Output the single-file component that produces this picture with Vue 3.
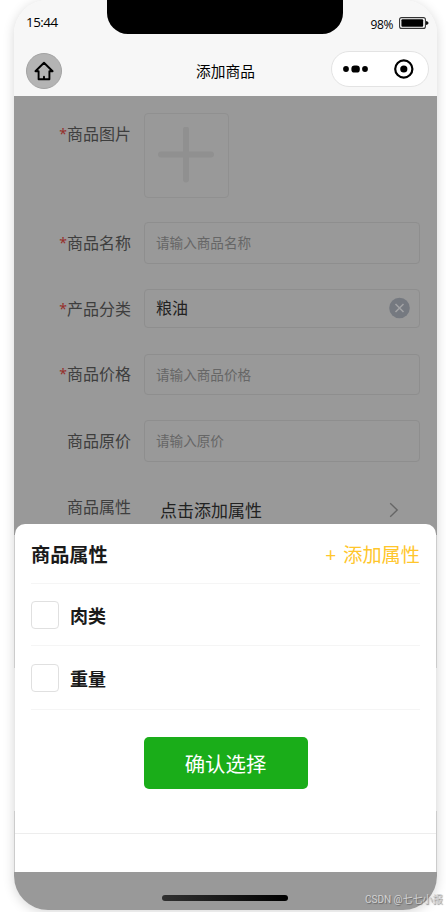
<script setup>
const fields = [
  { label: '商品名称', required: true, placeholder: '请输入商品名称', size: 'name' },
  { label: '产品分类', required: true, value: '粮油', size: 'category' },
  { label: '商品价格', required: true, placeholder: '请输入商品价格', size: 'price' },
  { label: '商品原价', required: false, placeholder: '请输入原价', size: 'original' },
]
const attributes = ['肉类', '重量']
</script>

<template>
  <div class="stage">
    <div class="phone">
      <header class="header">
        <div class="notch"></div>
        <div class="status">
          <span class="time">15:44</span>
          <span class="power">
            <span class="percent">98%</span>
            <svg class="battery" width="30" height="12" viewBox="0 0 30 12">
              <rect x=".6" y=".6" width="25.8" height="10.8" rx="2" fill="#fff" stroke="#333" stroke-width="1.1" />
              <rect x="2.4" y="2.3" width="21.8" height="7.4" rx="1" fill="#000" />
              <path d="M27 4 Q29.6 4.3 29.6 6 Q29.6 7.7 27 8Z" fill="#111" />
            </svg>
          </span>
        </div>
        <div class="navbar">
          <div class="home">
            <svg width="20" height="20" viewBox="0 0 20 20" fill="none" stroke="#000" stroke-width="1.9" stroke-linejoin="round" stroke-linecap="round">
              <path d="M10 1.7 L1.4 10.2 H4.6 V18.2 H15.4 V10.2 H18.6 Z M10 15.8 V18" />
            </svg>
          </div>
          <h1 class="title">添加商品</h1>
          <div class="capsule">
            <svg width="98" height="36" viewBox="0 0 98 36">
              <circle cx="15" cy="18" r="2.9" />
              <rect x="20.4" y="14.4" width="8.4" height="7.2" rx="3.2" />
              <circle cx="34" cy="18" r="2.9" />
              <circle cx="72.8" cy="18" r="8.6" fill="none" stroke="#000" stroke-width="2.2" />
              <circle cx="72.8" cy="18" r="3.6" />
            </svg>
          </div>
        </div>
      </header>

      <main class="form">
        <div class="row upload-row">
          <label class="label"><i>*</i>商品图片</label>
          <div class="upload">
            <svg width="58" height="58" viewBox="0 0 58 58" stroke="#909090" stroke-width="6" stroke-linecap="round">
              <path d="M28 2.500V52.500M3 27.500H53" />
            </svg>
          </div>
        </div>
        <div v-for="f in fields" :key="f.label" class="row" :class="f.size">
          <label class="label"><i v-if="f.required">*</i>{{ f.label }}</label>
          <div class="input">
            <span v-if="f.value" class="value">{{ f.value }}</span>
            <span v-else class="placeholder">{{ f.placeholder }}</span>
            <svg v-if="f.value" class="clear" width="22" height="22" viewBox="0 0 22 22">
              <circle cx="11.5" cy="11" r="10.3" fill="#757980" />
              <path d="M7.5 7l8 8M15.5 7l-8 8" stroke="#a3a4a6" stroke-width="1.5" />
            </svg>
          </div>
        </div>
        <div class="row attribute-row">
          <label class="label">商品属性</label>
          <div class="picker">
            <span>点击添加属性</span>
            <svg width="10" height="16" viewBox="0 0 10 16" fill="none" stroke="#666" stroke-width="1.4">
              <path d="M1.2 1.2L8.2 8L1.2 14.8" />
            </svg>
          </div>
        </div>
      </main>

      <section class="sheet">
        <div class="sheet-head">
          <h2>商品属性</h2>
          <span class="add"><b>+</b>添加属性</span>
        </div>
        <div v-for="name in attributes" :key="name" class="option">
          <span class="checkbox"></span>
          <span class="option-name">{{ name }}</span>
        </div>
        <button class="confirm">确认选择</button>
        <div class="sheet-foot"></div>
      </section>
      <div class="home-bar"></div>
    </div>
    <span class="watermark">CSDN @七七小报</span>
  </div>
</template>

<style>
body {
  background: #fff;
  overflow: hidden;
}
</style>

<style scoped>
* {
  box-sizing: border-box;
}
.stage {
  position: relative;
  width: 446px;
  height: 912px;
  padding-left: 14px;
  overflow: hidden;
  font-family: "Noto Sans", "Noto Sans CJK SC", sans-serif;
}
.phone {
  position: relative;
  display: flex;
  flex-direction: column;
  width: 423px;
  height: 910px;
  border-radius: 34px;
  overflow: hidden;
  background: linear-gradient(#f7f7f7 0 96px, #999 96px 535px, #ccc 535px 668px, #e8e8e8 668px 811px, #ccc 811px 872px, #999 872px);
  box-shadow: 0 2px 12px rgba(0, 0, 0, 0.16);
}
.header {
  position: relative;
  height: 96px;
  flex: none;
  background: #f7f7f7;
}
.notch {
  position: absolute;
  left: 93px;
  top: 0;
  width: 236px;
  height: 33.5px;
  border-radius: 0 0 21px 21px;
  background: #000;
}
.status {
  display: flex;
  justify-content: space-between;
  align-items: center;
  height: 46px;
  padding: 0 8px 0 12px;
  color: #000;
}
.time {
  margin-top: -2px;
  font-family: "Open Sans", "Noto Sans", sans-serif;
  font-size: 13.4px;
  letter-spacing: -0.5px;
}
.power {
  display: flex;
  align-items: center;
  gap: 6px;
}
.percent {
  font-family: "Open Sans", "Noto Sans", sans-serif;
  font-size: 12px;
  letter-spacing: -0.35px;
  padding-top: 2px;
}
.navbar {
  display: grid;
  grid-template-columns: 98px 1fr 98px;
  align-items: center;
  height: 46px;
  padding: 0 8px 0 12px;
}
.home {
  display: flex;
  align-items: center;
  justify-content: center;
  width: 36px;
  height: 36px;
  margin-top: 4px;
  border: 1px solid #a3a3a3;
  border-radius: 50%;
  background: #b4b4b4;
}
.title {
  margin: 3px 4px 0 0;
  font-size: 14.7px;
  line-height: 20px;
  font-weight: 400;
  text-align: center;
  color: #000;
}
.capsule {
  display: flex;
  align-items: center;
  justify-content: center;
  width: 98px;
  height: 36px;
  border: 1px solid #e3e3e3;
  border-radius: 18px;
  background: #fff;
}
.capsule svg {
  flex: none;
}
.form {
  display: flex;
  flex-direction: column;
  padding: 17px 17px 0 0;
}
.row {
  display: grid;
  grid-template-columns: 117px 1fr;
  column-gap: 13px;
  margin-bottom: 25px;
}
.upload-row {
  height: 84px;
}
.name,
.original {
  height: 42px;
}
.category {
  height: 39px;
  margin-bottom: 26px;
}
.price {
  height: 41px;
}
.label {
  height: 39px;
  line-height: 43px;
  text-align: right;
  white-space: nowrap;
  font-size: 16px;
  color: #3e3e3e;
}
.category .label,
.price .label {
  line-height: 41px;
}
.label i {
  position: relative;
  top: -1px;
  font-style: normal;
  font-size: 14px;
  color: #962f2b;
}
.upload {
  display: flex;
  align-items: center;
  justify-content: center;
  width: 85px;
  height: 85px;
  border: 1px solid #909090;
  border-radius: 4px;
}
.input {
  display: flex;
  align-items: center;
  justify-content: space-between;
  padding: 0 9px 2px 11px;
  border: 1px solid #8e8e8e;
  border-radius: 4px;
}
.placeholder {
  font-size: 13.6px;
  color: #666;
}
.value {
  margin-top: -1px;
  font-size: 16px;
  color: #222;
}
.attribute-row {
  margin: 3px 0 0;
  height: 40px;
}
.attribute-row .label {
  line-height: 35px;
}
.picker {
  display: flex;
  align-items: center;
  justify-content: space-between;
  padding: 0 21px 0 16px;
  font-size: 17px;
  color: #222;
}
.picker span {
  margin-top: -1px;
}
.sheet {
  position: absolute;
  left: 1px;
  top: 524px;
  width: 421px;
  height: 348px;
  padding: 0 16px;
  display: flex;
  flex-direction: column;
  background: #fff;
  border-radius: 10px 10px 0 0;
}
.sheet-head {
  display: flex;
  align-items: center;
  justify-content: space-between;
  height: 60px;
  flex: none;
  border-bottom: 1px solid #f5f5f5;
}
h2 {
  margin: 1px 0 0;
  font-size: 19.2px;
  font-weight: 700;
  color: #1a1a1a;
}
.add {
  font-size: 19.2px;
  color: #ffc62b;
}
.add b {
  margin-right: 7px;
  font-weight: 400;
}
.option {
  display: flex;
  align-items: center;
  gap: 11px;
  height: 62px;
  flex: none;
  border-bottom: 1px solid #f5f5f5;
}
.option + .option {
  height: 64px;
}
.checkbox {
  width: 28px;
  height: 28px;
  border: 1px solid #e0e0e0;
  border-radius: 4px;
}
.option-name {
  font-size: 18px;
  font-weight: 700;
  color: #1a1a1a;
}
.confirm {
  align-self: center;
  flex: none;
  width: 164px;
  height: 52px;
  margin: 27px 0 0 0;
  padding: 0;
  border: 0;
  border-radius: 5px;
  background: #1aad19;
  color: #fff;
  font-family: inherit;
  font-size: 20.4px;
}
.sheet-foot {
  flex: 1;
  margin: 44px -16px 0;
  border-top: 1px solid #ededed;
}
.home-bar {
  position: absolute;
  left: 148px;
  top: 895px;
  width: 126px;
  height: 6px;
  border-radius: 3px;
  background: linear-gradient(90deg, #303030, #000);
}
.watermark {
  position: absolute;
  left: 365px;
  top: 892px;
  font-family: Roboto, "Noto Sans CJK SC", sans-serif;
  font-size: 10px;
  line-height: 15px;
  white-space: nowrap;
  color: #d2d2d2;
  text-shadow: 1px 1px 1px rgba(80, 80, 80, 0.7);
}
</style>
